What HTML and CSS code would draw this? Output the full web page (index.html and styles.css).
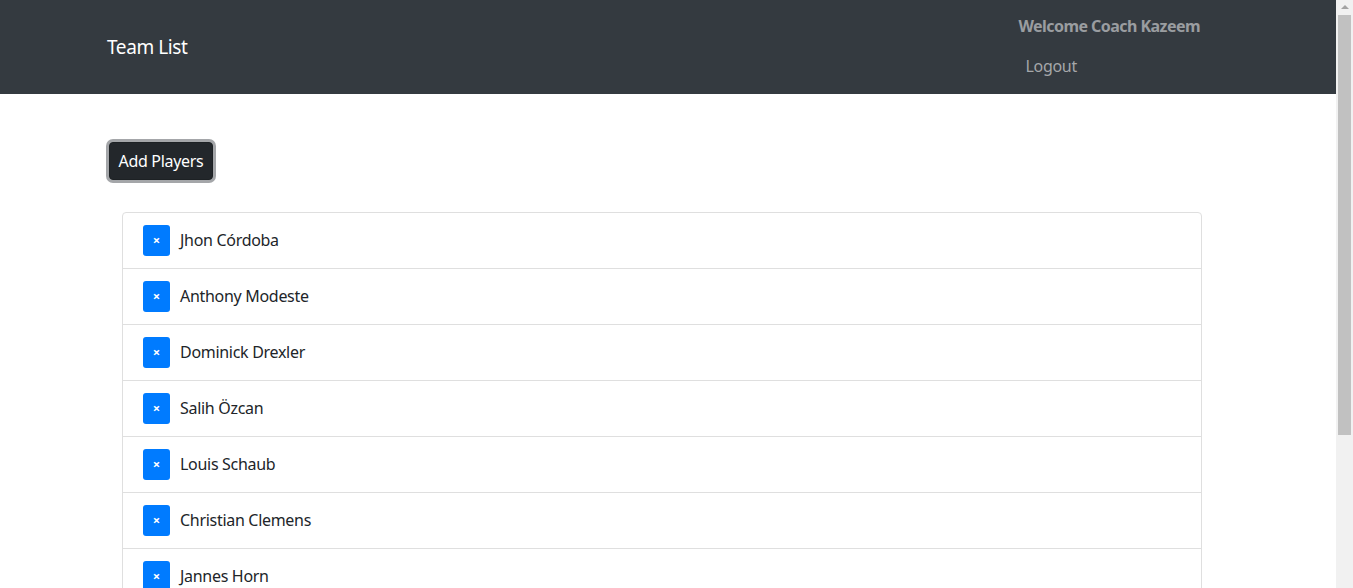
FILE: index.html
```html
<!DOCTYPE html>
<html>
<head>
<meta charset="utf-8">
<link rel="stylesheet" href="styles.css">
</head>
<body>
<div class="page">
  <nav class="navbar">
    <div class="brand">Team List</div>
    <div class="navright">
      <div class="welcome">Welcome Coach Kazeem</div>
      <a class="logout">Logout</a>
    </div>
  </nav>
  <main class="main">
    <button class="add-btn">Add Players</button>
    <ul class="list">
      <li class="item"><button class="del">×</button><span class="name">Jhon Córdoba</span></li>
      <li class="item"><button class="del">×</button><span class="name">Anthony Modeste</span></li>
      <li class="item"><button class="del">×</button><span class="name">Dominick Drexler</span></li>
      <li class="item"><button class="del">×</button><span class="name">Salih Özcan</span></li>
      <li class="item"><button class="del">×</button><span class="name">Louis Schaub</span></li>
      <li class="item"><button class="del">×</button><span class="name">Christian Clemens</span></li>
      <li class="item"><button class="del">×</button><span class="name">Jannes Horn</span></li>
      <li class="item"><button class="del">×</button><span class="name">Timo Horn</span></li>
    </ul>
  </main>
</div>
<div class="scrollbar">
  <div class="arrow"></div>
  <div class="thumb"></div>
</div>
</body>
</html>
```
FILE: styles.css
```css
* { box-sizing: border-box; }
html, body { margin: 0; padding: 0; height: 100%; overflow: hidden; }
body {
  display: flex;
  font-family: "Noto Sans", "Open Sans", sans-serif;
  color: #212529;
  background: #fff;
  font-size: 16px;
}
.page { width: 1336px; flex: none; height: 588px; overflow: hidden; }
.navbar {
  height: 94px;
  background: #343a40;
  display: flex;
  justify-content: space-between;
  align-items: flex-start;
  padding: 0 136px 0 107px;
}
.brand {
  color: #fff;
  font-size: 19px;
  letter-spacing: -0.4px;
  line-height: 24px;
  margin-top: 35px;
}
.navright { display: flex; flex-direction: column; padding-top: 14px; }
.welcome {
  color: #9a9da0;
  font-weight: 700;
  font-size: 16px;
  letter-spacing: -0.55px;
  line-height: 24px;
}
.logout {
  color: #a5a7aa;
  font-size: 16px;
  letter-spacing: -0.3px;
  line-height: 24px;
  margin-top: 16px;
  margin-left: 7px;
}
.main { padding: 48px 0 0 109px; }
.add-btn {
  display: block;
  background: #23272b;
  color: #fff;
  border: 1px solid #1d2124;
  border-radius: 4px;
  font-family: inherit;
  font-size: 16px;
  letter-spacing: -0.3px;
  height: 38px;
  width: 104px;
  padding: 0;
  box-shadow: 0 0 0 3px #a4a6a9;
}
.list {
  list-style: none;
  margin: 32px 0 0 13px;
  padding: 0;
  width: 1080px;
  border: 1px solid #dfdfdf;
  border-radius: 4px;
}
.item {
  display: flex;
  align-items: center;
  height: 56px;
  padding: 0 20px;
  border-bottom: 1px solid #dfdfdf;
}
.del {
  width: 27px;
  height: 31px;
  background: #007bff;
  color: #fff;
  border: none;
  border-radius: 3px;
  font-family: inherit;
  font-size: 13px;
  font-weight: 700;
  padding: 0;
  margin-top: -1px;
}
.name { margin-left: 10px; font-size: 16px; letter-spacing: -0.3px; margin-top: -2px; }
.scrollbar {
  width: 17px;
  height: 588px;
  background: #f1f1f1;
  display: flex;
  flex-direction: column;
  align-items: center;
}
.arrow {
  margin-top: 5px;
  width: 0; height: 0;
  border-left: 4px solid transparent;
  border-right: 4px solid transparent;
  border-bottom: 4px solid #a3a3a3;
}
.thumb {
  margin-top: 6px;
  width: 13px;
  height: 420px;
  background: #c1c1c1;
}
```
